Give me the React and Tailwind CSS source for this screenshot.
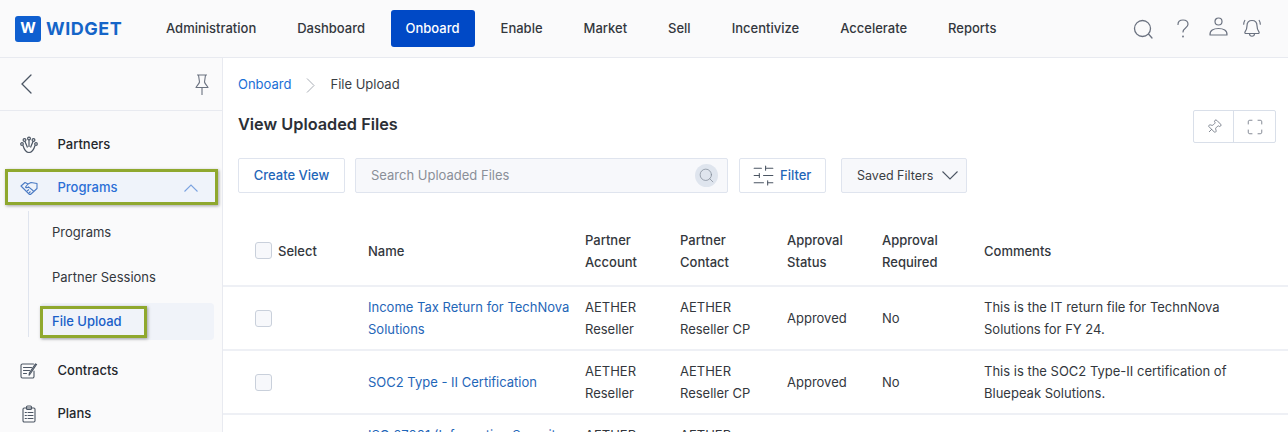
import { Search, Pin, Maximize, SlidersHorizontal } from "lucide-react";

const navItems = ["Administration", "Dashboard", "Onboard", "Enable", "Market", "Sell", "Incentivize", "Accelerate", "Reports"];

const rows = [
  {
    name: "Income Tax Return for TechNova Solutions",
    comment: "This is the IT return file for TechnNova Solutions for FY 24.",
  },
  {
    name: "SOC2 Type - II Certification",
    comment: "This is the SOC2 Type-II certification of Bluepeak Solutions.",
  },
  {
    name: "ISO 27001 (Information Security Management)",
    comment: "",
  },
];

const gridCols = "grid grid-cols-[145px_217px_95px_107px_95px_102px_1fr]";

const PartnersIcon = () => (
  <svg width="18" height="18" viewBox="0 0 18 18" fill="none" stroke="#4b5563" strokeWidth="1.2">
    <circle cx="9" cy="2.5" r="1.4" />
    <circle cx="4.5" cy="4" r="1.4" />
    <circle cx="13.5" cy="4" r="1.4" />
    <circle cx="2" cy="8" r="1.3" />
    <circle cx="16" cy="8" r="1.3" />
    <path d="M9 4v7M5 5.500l2.500 6M13 5.500l-2.500 6M3 9.500c1 3.500 3 7 6 7s5-3.500 6-7" />
  </svg>
);

const HandshakeIcon = () => (
  <svg width="18" height="14" viewBox="0 0 18 14" fill="none" stroke="#4b7bc4" strokeWidth="1.1" strokeLinejoin="round">
    <path d="M1 5l4-3.500 3 1.500 3-1.500 6 1v5l-6 5.500a1.500 1.500 0 0 1-2 0L1 5z" />
    <path d="M8 3L5.500 6c1 1 2 .8 3-.2l5 4.200M7 10l2-1.500M9 12l1.500-1.500" />
  </svg>
);

const ContractsIcon = () => (
  <svg width="18" height="16" viewBox="0 0 18 16" fill="none" stroke="#4b5563" strokeWidth="1.1" strokeLinecap="round">
    <path d="M14 8v5.500a1.500 1.500 0 0 1-1.500 1.500h-10A1.500 1.500 0 0 1 1 13.500V2.500A1.500 1.500 0 0 1 2.500 1h11" />
    <path d="M3.500 4.500h8M3.500 7.500h6M3.500 10.500h3" />
    <path d="M16.500 1.500l-6 9-1.500 2 .4-2.500 6-9z" />
  </svg>
);

const PlansIcon = () => (
  <svg width="14" height="18" viewBox="0 0 14 18" fill="none" stroke="#4b5563" strokeWidth="1.1" strokeLinecap="round">
    <rect x="1" y="3" width="12" height="14" rx="1.2" />
    <rect x="4.500" y="1" width="5" height="3.500" rx="1" />
    <path d="M3.200 7.500h1.200M6 7.500h5M3.200 10.500h1.200M6 10.500h5M3.200 13.500h1.200M6 13.500h5" />
  </svg>
);

const SearchGlyph = () => (
  <svg width="20" height="20" viewBox="0 0 20 20" fill="none" stroke="#6b7280" strokeWidth="1.3" strokeLinecap="round">
    <circle cx="9.500" cy="9.500" r="8" />
    <path d="M15.500 15l3.500 4" />
  </svg>
);

const QuestionGlyph = () => (
  <svg width="12" height="19" viewBox="0 0 12 19" fill="none" stroke="#6b7280" strokeWidth="1.200" strokeLinecap="round">
    <path d="M1 5.500C1 2.800 3 1 6 1s5 1.800 5 4.300c0 3.700-5 3.700-5 7.700" />
    <circle cx="6" cy="17.500" r=".4" />
  </svg>
);

const UserIcon = () => (
  <svg width="19" height="19" viewBox="0 0 19 19" fill="none" stroke="#6b7280" strokeWidth="1.2">
    <circle cx="9.500" cy="4.500" r="3.500" />
    <path d="M1 18c-.3-4.500 3.500-6.500 8.500-6.500S18.300 13.500 18 18z" strokeLinejoin="round" />
  </svg>
);

const BellIcon = () => (
  <svg width="18" height="19" viewBox="0 0 18 19" fill="none" stroke="#6b7280" strokeWidth="1.2" strokeLinecap="round" strokeLinejoin="round">
    <path d="M9 1.500c-3 0-5 2.200-5 5.300 0 2.200-.2 4-2 6.200-.6 1 .2 1.500 1 1.500h12c.8 0 1.600-.5 1-1.500-1.800-2.200-2-4-2-6.200 0-3.100-2-5.300-5-5.300z" />
    <path d="M6.500 15c.3 3 4.700 3 5 0" />
    <path d="M1.800 1.500C1 2.700.7 4 .7 5.200M16.200 1.500c.8 1.200 1.100 2.500 1.100 3.700" />
  </svg>
);

const SidebarPin = () => (
  <svg width="14" height="21" viewBox="0 0 14 21" fill="none" stroke="#6b7280" strokeWidth="1.1" strokeLinejoin="round">
    <path d="M2 1h10M3.500 1l1 7C4 10 2 11.500 1 13.500h12C12 11.500 10 10 9.500 8l1-7M7 13.500V21" />
  </svg>
);

const Checkbox = () => <div className="w-[17px] h-[17px] rounded-[3px] border border-[#c9d0db] bg-[#f7f8fb]" />;

export default function App() {
  return (
    <div className="w-[1288px] h-[432px] overflow-hidden bg-white font-['Inter',sans-serif] text-[13px] text-[#2b2f36]">
      {/* Top bar */}
      <header className="h-[58px] flex items-center bg-[#fafafb] border-b border-[#e8eaf0]">
        <div className="flex items-center gap-[5px] pl-[15px] w-[145.500px] shrink-0">
          <div className="w-[26px] h-[26px] rounded-[3px] bg-[#0f5fd0] text-white font-bold text-[15px] flex items-center justify-center">W</div>
          <span className="text-[#1565c8] font-bold text-[18px] tracking-[0.5px]">WIDGET</span>
        </div>
        <nav className="flex items-center h-[37px] font-medium">
          {navItems.map((item) =>
            item === "Onboard" ? (
              <a key={item} className="h-[37px] w-[84px] ml-[5px] mr-[5.500px] flex items-center justify-center rounded-[3px] bg-[#0049c6] text-white">
                {item}
              </a>
            ) : (
              <a key={item} className="h-[37px] px-[20.500px] flex items-center text-[#33373d]">
                {item}
              </a>
            )
          )}
        </nav>
        <div className="ml-auto flex items-center pr-[27px]">
          <SearchGlyph />
          <div className="ml-[24px] flex">
            <QuestionGlyph />
          </div>
          <div className="ml-[20px] mb-[5px] flex">
            <UserIcon />
          </div>
          <div className="ml-[15px] flex">
            <BellIcon />
          </div>
        </div>
      </header>

      <div className="flex">
        {/* Sidebar */}
        <aside className="w-[223px] h-[374px] shrink-0 bg-[#fafafb] border-r border-[#e8eaf0] overflow-hidden font-medium">
          <div className="h-[53px] flex items-center justify-between pl-[21px] pr-[13px] border-b border-[#e8eaf0]">
            <svg width="11" height="20" viewBox="0 0 11 20" fill="none" stroke="#4b5563" strokeWidth="1.300" strokeLinecap="round">
              <path d="M10 1L1 10l9 9" />
            </svg>
            <SidebarPin />
          </div>
          <div className="h-[58px] pt-[10px] flex items-center pl-[20px] gap-[19.500px] text-[#24272c]">
            <PartnersIcon />
            <span>Partners</span>
          </div>
          <div className="ml-[5px] mr-[4px] h-[36px] pt-[1px] flex items-center border-[3px] border-[#8fa82e] bg-[#eff3fa] pl-[12px] pr-[17px] text-[#2b6fd6] shadow-[1px_1px_3px_rgba(0,0,0,0.35)]">
            <HandshakeIcon />
            <span className="ml-[19.500px]">Programs</span>
            <svg width="14" height="8" viewBox="0 0 14 8" fill="none" stroke="#7ba3e0" strokeWidth="1.100" className="ml-auto">
              <path d="M.5 7.500L7 1l6.500 6.500" />
            </svg>
          </div>
          <div className="ml-[28px] mt-[6px] h-[126px] border-l border-[#dfe4ee] pl-[11px] pr-[8px] font-normal">
            <div className="h-[44px] pl-[12px] flex items-center text-[#33373d]">Programs</div>
            <div className="h-[45px] pl-[12px] flex items-center text-[#33373d]">Partner Sessions</div>
            <div className="h-[37px] mt-[3px] rounded-[4px] bg-[#f0f3f9] flex items-center">
              <div className="h-[32px] w-[107px] pl-[9px] flex items-center border-[3px] border-[#8fa82e] text-[#1a5fc8] font-medium shadow-[1px_1px_3px_rgba(0,0,0,0.35)]">
                File Upload
              </div>
            </div>
          </div>
          <div className="h-[44px] mt-[12px] flex items-center pl-[20px] gap-[19.500px] text-[#24272c]">
            <ContractsIcon />
            <span>Contracts</span>
          </div>
          <div className="h-[42px] flex items-center pl-[22px] gap-[21.500px] text-[#24272c]">
            <PlansIcon />
            <span>Plans</span>
          </div>
        </aside>

        {/* Main content */}
        <main className="flex-1 min-w-0">
          <div className="h-[52px] pt-[2px] flex items-center pl-[15px]">
            <a className="text-[#1a6fd6]">Onboard</a>
            <svg width="9" height="15" viewBox="0 0 9 15" fill="none" stroke="#a8adb5" strokeWidth="1" className="ml-[15px] mr-[15px]">
              <path d="M1 .5l7 7-7 7" />
            </svg>
            <span className="text-[#3a3e44]">File Upload</span>
          </div>
          <div className="h-[48px] flex items-start justify-between pl-[15px] pr-[12px]">
            <h1 className="text-[16.300px] leading-[28px] font-semibold text-[#2b2f36]">View Uploaded Files</h1>
            <div className="flex h-[33px] rounded-[2px] border border-[#d9dfe9]">
              <div className="w-[40px] flex items-center justify-center border-r border-[#d9dfe9]">
                <Pin size={16} strokeWidth={1.200} className="rotate-45 text-[#6b7280]" />
              </div>
              <div className="w-[41px] flex items-center justify-center">
                <Maximize size={18} strokeWidth={1.100} className="text-[#6b7280]" />
              </div>
            </div>
          </div>
          {/* Toolbar */}
          <div className="flex items-center h-[35px] pl-[15px]">
            <button className="w-[107px] h-[35px] rounded-[2px] border border-[#dfe4ee] text-[#1f66b8] font-medium">Create View</button>
            <div className="ml-[10px] w-[373px] h-[35px] rounded-[2px] border border-[#dfe4ee] bg-[#f7f8fb] flex items-center pl-[15px] pr-[9px] text-[#8a8f98]">
              <span>Search Uploaded Files</span>
              <div className="ml-auto w-[23px] h-[23px] rounded-full bg-[#dfe5ee] flex items-center justify-center">
                <Search size={17} strokeWidth={1} className="text-[#7d8693]" />
              </div>
            </div>
            <button className="ml-[11px] w-[87px] h-[35px] rounded-[2px] border border-[#dfe4ee] flex items-center pl-[11px] gap-[4px] text-[#1f66b8] font-medium">
              <SlidersHorizontal size={25} strokeWidth={1} className="text-[#4b5563]" />
              Filter
            </button>
            <button className="ml-[15px] w-[126px] h-[35px] rounded-[2px] border border-[#dfe4ee] bg-[#f7f8fb] flex items-center pl-[15px] gap-[9px] text-[#3a3e44] text-[12.500px]">
              <span className="mt-[2px]">Saved Filters</span>
              <svg width="16" height="9" viewBox="0 0 16 9" fill="none" stroke="#4b5563" strokeWidth="1.100">
                <path d="M.5.500L8 8l7.500-7.500" />
              </svg>
            </button>
          </div>

          {/* Table */}
          <div className="mt-[29px]">
            <div className={`${gridCols} h-[65px] pb-[6px] items-center border-b-2 border-[#eef0f5] font-medium leading-[22px] text-[#33373d]`}>
              <div className="pl-[32px] flex items-center gap-[6px]">
                <Checkbox />
                <span>Select</span>
              </div>
              <div>Name</div>
              <div>Partner<br />Account</div>
              <div>Partner<br />Contact</div>
              <div>Approval<br />Status</div>
              <div>Approval<br />Required</div>
              <div>Comments</div>
            </div>
            {rows.map((row) => (
              <div key={row.name} className={`${gridCols} h-[64px] items-center border-b-2 border-[#eef0f5] leading-[22px] text-[#33373d]`}>
                <div className="pl-[32px]">
                  <Checkbox />
                </div>
                <a className="pr-[8px] text-[#1f66b8]">{row.name}</a>
                <div>AETHER<br />Reseller</div>
                <div>AETHER<br />Reseller CP</div>
                <div>Approved</div>
                <div>No</div>
                <div className="pr-[30px]">{row.comment}</div>
              </div>
            ))}
          </div>
        </main>
      </div>
    </div>
  );
}
